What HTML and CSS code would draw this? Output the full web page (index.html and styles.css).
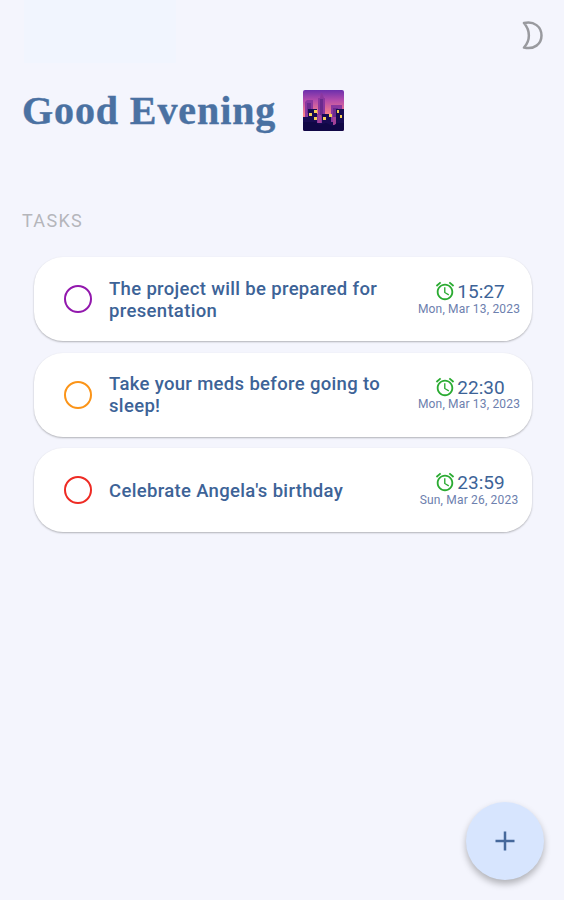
FILE: index.html
```
<!DOCTYPE html>
<html lang="en">
<head>
<meta charset="UTF-8">
<meta name="viewport" content="width=device-width, initial-scale=1.0">
  <title>Tasks</title>
  <link rel="stylesheet" href="styles.css">
</head>
<body>
  <!-- shared alarm clock icon -->
  <svg class="defs" width="0" height="0">
    <symbol id="alarm" viewBox="0 0 24 24">
      <path d="M22 5.72l-4.6-3.86-1.29 1.53 4.6 3.86L22 5.72zM7.88 3.39L6.6 1.86 2 5.71l1.29 1.53 4.59-3.85zM12.5 8H11v6l4.75 2.85.75-1.23-4-2.37V8zM12 4c-4.97 0-9 4.03-9 9s4.02 9 9 9c4.97 0 9-4.03 9-9s-4.03-9-9-9zm0 16c-3.87 0-7-3.13-7-7s3.13-7 7-7 7 3.13 7 7-3.13 7-7 7z"/>
    </symbol>
  </svg>

  <header class="top-bar">
    <button class="theme-button" aria-label="Dark mode">
      <svg width="24" height="30" viewBox="0 0 24 30">
        <path d="M4 3C14 0.500 21.500 7 21.500 15.500S14 30 4 27.500C10.500 20.500 10.500 10.500 4 3Z"/>
      </svg>
    </button>
  </header>

  <main>
    <div class="greeting">
      <h1>Good Evening</h1>
      <svg class="city" viewBox="0 0 41 41">
        <defs>
          <linearGradient id="sky" x1="0" y1="0" x2="0" y2="1">
            <stop offset="0" stop-color="#6b2fac"/>
            <stop offset=".25" stop-color="#b44cac"/>
            <stop offset=".6" stop-color="#fa8288"/>
          </linearGradient>
        </defs>
        <rect width="41" height="41" rx="2" fill="url(#sky)"/>
        <path fill="#8a379f" d="M2 40V12l2-2h6v14h5V8h2l1-5h1l2 5h1v18h6V15h11v25z"/>
        <path fill="#6b2a8e" d="M4 13h4v10H4zM17 9h3v17h-3zM30 18h5v9h-5z"/>
        <path fill="#170b52" d="M0 27h5v-8h9v14h5V24h9v8h5V19h8v20a2 2 0 0 1-2 2H2a2 2 0 0 1-2-2z"/>
        <path fill="#a44296" d="M15 25h3v8h-3zM30 27h3v8h-3z"/>
        <path fill="#f4cf57" d="M6 23h3v3H6zM11 20h3v3h-3zM11 27h3v3h-3zM20 27h3v3h-3zM26 24h3v3h-3zM34 20h2v3h-2zM37 25h2v3h-2z"/>
        <path fill="#100746" d="M0 32h13l3 3 7-2 7 3 4-3h7v6a2 2 0 0 1-2 2H2a2 2 0 0 1-2-2z"/>
      </svg>
    </div>

    <h2>TASKS</h2>

    <div class="task-list">
      <div class="task">
        <span class="circle purple"></span>
        <p>The project will be prepared for presentation</p>
        <div class="due">
          <div class="time"><svg><use href="#alarm"/></svg>15:27</div>
          <div class="date">Mon, Mar 13, 2023</div>
        </div>
      </div>
      <div class="task">
        <span class="circle orange"></span>
        <p>Take your meds before going to sleep!</p>
        <div class="due">
          <div class="time"><svg><use href="#alarm"/></svg>22:30</div>
          <div class="date">Mon, Mar 13, 2023</div>
        </div>
      </div>
      <div class="task">
        <span class="circle red"></span>
        <p>Celebrate Angela's birthday</p>
        <div class="due">
          <div class="time"><svg><use href="#alarm"/></svg>23:59</div>
          <div class="date">Sun, Mar 26, 2023</div>
        </div>
      </div>
    </div>
  </main>

  <button class="add-button" aria-label="Add task">
    <svg width="20" height="20" viewBox="0 0 20 20"><path d="M10 .5v19M.5 10h19"/></svg>
  </button>
</body>
</html>
```
FILE: styles.css
```
* {
  box-sizing: border-box;
}
body {
  margin: 0;
  height: 900px;
  overflow: hidden;
  background: #f4f5fd;
  color: #3d6397;
  font-family: Roboto, sans-serif;
}
button {
  border: none;
  padding: 0;
  cursor: pointer;
}
.defs {
  display: block;
}
.top-bar {
  display: flex;
  justify-content: flex-end;
  height: 63px;
  padding: 20px 20px 0 0;
  background: linear-gradient(#f1f5fe, #f1f5fe) 24px 0 / 152px 63px no-repeat;
}
.theme-button {
  width: 24px;
  height: 30px;
  background: none;
}
.theme-button path {
  fill: none;
  stroke: #999a9f;
  stroke-width: 2.5;
  stroke-linejoin: round;
}
.greeting {
  display: flex;
  align-items: center;
  height: 95px;
  padding-left: 22px;
}
h1 {
  width: 281px;
  margin: 0;
  color: #4a71a2;
  font-family: "Liberation Serif", serif;
  font-size: 40px;
  line-height: 44px;
  letter-spacing: 0.9px;
  white-space: nowrap;
  -webkit-text-stroke: 0.4px #4a71a2;
}
.city {
  width: 41px;
  height: 41px;
}
h2 {
  margin: 51px 0 0 22px;
  color: #b5b6bb;
  font-size: 18px;
  font-weight: 400;
  line-height: 24px;
  letter-spacing: 1.3px;
}
.task-list {
  display: flex;
  flex-direction: column;
  gap: 11.5px;
  margin: 24px 32px 0 34px;
}
.task {
  display: flex;
  align-items: center;
  height: 84px;
  padding: 0 11px 0 30px;
  background: white;
  border-radius: 29px;
  box-shadow: 0 1px 2px rgba(0, 0, 0, 0.28);
}
.circle {
  flex: none;
  width: 28px;
  height: 28px;
  border: 2.4px solid;
  border-radius: 50%;
}
.purple {
  color: #9218ad;
}
.orange {
  color: #fb9418;
}
.red {
  color: #ee2b24;
}
.circle {
  border-color: currentColor;
}
.task p {
  width: 290px;
  margin: 1px 0 0 17px;
  font-size: 18.5px;
  font-weight: 500;
  line-height: 22px;
  letter-spacing: 0.33px;
}
.due {
  flex: none;
  width: 104px;
  margin-left: auto;
  text-align: center;
}
.time {
  display: flex;
  align-items: center;
  justify-content: center;
  height: 20px;
  padding-left: 1px;
  font-size: 19px;
  gap: 1px;
}
.time svg {
  width: 22px;
  height: 22px;
  margin-top: -1px;
  fill: #2bab32;
}
.date {
  font-size: 12px;
  line-height: 15px;
  letter-spacing: 0.18px;
  color: #6d80ae;
  white-space: nowrap;
}
.add-button {
  position: fixed;
  right: 20px;
  bottom: 20px;
  display: flex;
  align-items: center;
  justify-content: center;
  width: 78px;
  height: 78px;
  background: #d7e5fe;
  border-radius: 50%;
  box-shadow: 0 4px 7px rgba(0, 0, 0, 0.28);
}
.add-button path {
  stroke: #45689b;
  stroke-width: 2.5;
}
```
